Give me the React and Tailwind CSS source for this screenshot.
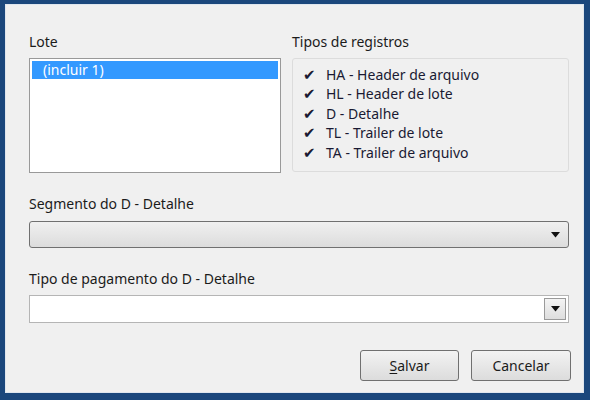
const registros = [
  'HA - Header de arquivo',
  'HL - Header de lote',
  'D - Detalhe',
  'TL - Trailer de lote',
  'TA - Trailer de arquivo',
];

function Arrow() {
  return (
    <svg width="9" height="6" viewBox="0 0 9 6">
      <path d="M0 0h9L4.5 5.5z" fill="#111" />
    </svg>
  );
}

export default function App() {
  return (
    <div className="h-[400px] w-[590px] bg-[#1b477c] pb-[7px] pl-[5px] pr-[6px] pt-[4px] font-['Noto_Sans',sans-serif] text-[14px] leading-4 text-[#1b1b1b]">
      <div className="flex h-full flex-col border border-[#dfe6ee] bg-[#f0f0f0] pl-[23px] pr-[14px] pt-[29px]">
        <div className="flex gap-[11px]">
          <div className="w-[252px]">
            <p className="mb-2">Lote</p>
            <div className="h-[115px] border border-[#999] bg-white p-[2px]">
              <div className="h-[18px] bg-[#3399ff] pl-[11px] leading-[18px] text-white">(incluir 1)</div>
            </div>
          </div>
          <div className="flex-1">
            <p className="mb-2">Tipos de registros</p>
            <div className="h-[114px] rounded-[3px] border border-[#dcdcdc] pl-[10px] pt-[6px]">
              {registros.map((r) => (
                <div key={r} className="flex h-[19.5px] items-center gap-[8px] text-[#1a1a33]">
                  <span className="w-[15px] font-['DejaVu_Sans',sans-serif] text-[15px] italic">✔</span>
                  <span>{r}</span>
                </div>
              ))}
            </div>
          </div>
        </div>

        <p className="mb-[9px] mt-[23px]">Segmento do D - Detalhe</p>
        <div className="flex h-[27px] items-center justify-end rounded-[3px] border border-[#707070] bg-gradient-to-b from-[#f0f0f0] to-[#dcdcdc] pr-[8px]">
          <Arrow />
        </div>

        <p className="mb-2 mt-[23px]">Tipo de pagamento do D - Detalhe</p>
        <div className="flex h-[28px] items-center justify-end border border-[#b5b5b5] bg-white pr-[2px]">
          <div className="flex h-[22px] w-[22px] items-center justify-center border border-[#9a9a9a] bg-gradient-to-b from-[#f4f4f4] to-[#dedede]">
            <Arrow />
          </div>
        </div>

        <div className="mt-[27px] flex justify-end gap-[12px]">
          <button className="h-[31px] w-[99px] rounded-[3px] border border-[#707070] bg-gradient-to-b from-[#f3f3f3] to-[#dcdcdc] text-[#1b1b1b]">
            <span className="underline underline-offset-2">S</span>alvar
          </button>
          <button className="-mr-[2px] h-[31px] w-[100px] rounded-[3px] border border-[#707070] bg-gradient-to-b from-[#f3f3f3] to-[#dcdcdc] text-[#1b1b1b]">
            Cancelar
          </button>
        </div>
      </div>
    </div>
  );
}
